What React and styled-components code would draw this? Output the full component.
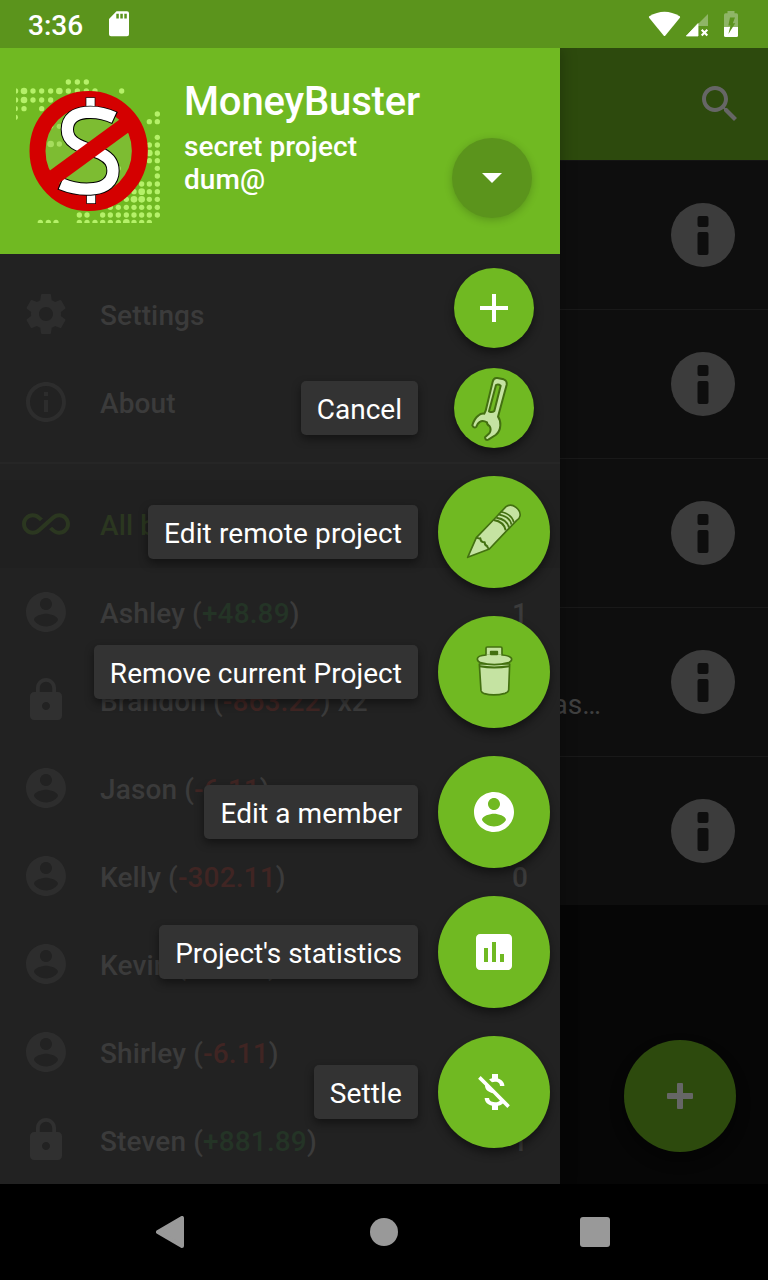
import React from "react";
import styled, { createGlobalStyle } from "styled-components";

const GlobalStyle = createGlobalStyle`
  * { box-sizing: border-box; }
  body { margin: 0; background: #000; font-family: Roboto, "Liberation Sans", sans-serif; }
  svg { display: block; flex: none; }
`;

const green = "#70b922";
const darkGreen = "#5b941c";

const Screen = styled.div`
  width: 768px;
  height: 1280px;
  display: flex;
  flex-direction: column;
  overflow: hidden;
`;

const StatusBar = styled.header`
  height: 48px;
  flex: none;
  display: flex;
  align-items: center;
  padding: 0 30px 0 28px;
  background: ${darkGreen};
  color: #fff;
`;

const Clock = styled.span`
  width: 81px;
  font-size: 28px;
  font-weight: 500;
  line-height: 32px;
  padding-top: 3px;
`;

const StatusIcons = styled.div`
  display: flex;
  margin-left: auto;
`;

const Body = styled.div`
  position: relative;
  flex: 1;
  min-height: 0;
  overflow: hidden;
`;

const BillsPage = styled.main`
  height: 100%;
  display: flex;
  flex-direction: column;
  background: #0f0f0f;
`;

const Toolbar = styled.div`
  height: 112px;
  flex: none;
  display: flex;
  align-items: center;
  justify-content: flex-end;
  padding-right: 24px;
  background: ${green};
  color: #fff;
`;

const BillRow = styled.div`
  height: 149px;
  flex: none;
  display: flex;
  align-items: center;
  padding-right: 33px;
  background: #232323;
  border-top: 1px solid ${(p) => (p.$first ? "#353535" : "#404040")};
`;

const BillTitle = styled.span`
  width: 601px;
  margin-right: 70px;
  padding-top: 46px;
  text-align: right;
  font-size: 28px;
  line-height: 32px;
  color: #a0a0a0;
`;

const AddBill = styled.button`
  position: absolute;
  right: 32px;
  bottom: 32px;
  width: 112px;
  height: 112px;
  border: 0;
  padding: 0;
  border-radius: 50%;
  display: grid;
  place-items: center;
  background: ${green};
  box-shadow: 0 8px 14px rgba(0, 0, 0, 0.4);
`;

const Scrim = styled.div`
  position: absolute;
  inset: 0;
  background: rgba(0, 0, 0, 0.6);
`;

const Drawer = styled.aside`
  position: absolute;
  inset: 0 auto 0 0;
  width: 560px;
  display: flex;
  flex-direction: column;
  background: #222;
  box-shadow: 2px 0 14px rgba(0, 0, 0, 0.25);
`;

const DrawerHeader = styled.div`
  height: 206px;
  flex: none;
  display: flex;
  align-items: flex-start;
  padding: 31px 28px 0 16px;
  background: ${green};
`;

const Account = styled.div`
  margin-left: 24px;
  color: #fff;
  font-weight: 500;
`;

const AppName = styled.div`
  font-size: 40px;
  line-height: 48px;
  letter-spacing: -0.15px;
  margin-top: -1px;
`;

const ProjectName = styled.div`
  font-size: 28px;
  line-height: 33px;
  letter-spacing: 0.07px;
  white-space: pre-line;
  margin-top: 4px;
`;

const Expand = styled.button`
  width: 80px;
  height: 80px;
  margin: 59px 0 0 auto;
  border: 0;
  padding: 0;
  border-radius: 50%;
  display: grid;
  place-items: center;
  background: ${darkGreen};
  box-shadow: 0 2px 8px rgba(0, 0, 0, 0.2);
`;

const MenuGroup = styled.nav`
  padding: ${(p) => (p.$top ? "16px 0" : "16px 0 0")};
  border-top: ${(p) => (p.$top ? "0" : "2px solid #262626")};
`;

const MenuRow = styled.div`
  height: 88px;
  display: flex;
  align-items: center;
  padding: 0 32px 0 22px;
  gap: 30px;
  background: ${(p) => (p.$active ? "#202020" : "transparent")};
  color: ${(p) => (p.$active ? "#2b3720" : p.$locked ? "#303030" : "#2d2d2d")};
`;

const MenuText = styled.span`
  font-size: 28px;
  font-weight: 500;
  line-height: 32px;
  letter-spacing: 0.13px;
  padding-top: 3px;
  white-space: nowrap;
  color: ${(p) => (p.$active ? "#2b3720" : "#3b3b3b")};
`;

const Amount = styled.span`
  color: ${(p) => (p.$positive ? "#243426" : "#402523")};
`;

const Count = styled(MenuText)`
  margin-left: auto;
`;

const SpeedDial = styled.div`
  position: absolute;
  top: 220px;
  left: 0;
  width: 550px;
  display: flex;
  flex-direction: column;
`;

const DialRow = styled.div`
  display: flex;
  align-items: center;
  justify-content: flex-end;
  gap: ${(p) => (p.$mini ? 36 : 20)}px;
  padding-right: ${(p) => (p.$mini ? 16 : 0)}px;
  margin-bottom: ${(p) => p.$after ?? 28}px;
`;

const Chip = styled.span`
  height: 54px;
  padding: 12px 16px 0;
  border-radius: 5px;
  background: #333;
  color: #fff;
  font-size: 28px;
  line-height: 33px;
  letter-spacing: ${(p) => p.$tracking ?? 0}px;
  white-space: nowrap;
  box-shadow: 0 4px 10px rgba(0, 0, 0, 0.45);
`;

const Fab = styled.button`
  width: ${(p) => (p.$mini ? 80 : 112)}px;
  height: ${(p) => (p.$mini ? 80 : 112)}px;
  border: 0;
  padding: 0;
  border-radius: 50%;
  display: grid;
  place-items: center;
  background: ${green};
  color: #fff;
  box-shadow: 0 5px 10px rgba(0, 0, 0, 0.45);
`;

const NavigationBar = styled.footer`
  height: 96px;
  flex: none;
  display: flex;
  align-items: center;
  justify-content: space-between;
  padding: 0 158px 0 156px;
  background: #000;
`;

const HomeDot = styled.span`
  width: 28px;
  height: 28px;
  border-radius: 50%;
  background: #999;
`;

const RecentSquare = styled.span`
  width: 30px;
  height: 30px;
  border-radius: 3px;
  background: #999;
`;

const paths = {
  settings:
    "M19.43 12.98c.04-.32.07-.64.07-.98s-.03-.66-.07-.98l2.11-1.65c.19-.15.24-.42.12-.64l-2-3.46c-.12-.22-.39-.3-.61-.22l-2.49 1c-.52-.4-1.08-.73-1.69-.98l-.38-2.65C14.46 2.18 14.25 2 14 2h-4c-.25 0-.46.18-.49.42l-.38 2.65c-.61.25-1.17.59-1.69.98l-2.49-1c-.23-.09-.49 0-.61.22l-2 3.46c-.13.22-.07.49.12.64l2.11 1.65c-.04.32-.07.65-.07.98s.03.66.07.98l-2.11 1.65c-.19.15-.24.42-.12.64l2 3.46c.12.22.39.3.61.22l2.49-1c.52.4 1.08.73 1.69.98l.38 2.65c.03.24.24.42.49.42h4c.25 0 .46-.18.49-.42l.38-2.65c.61-.25 1.17-.59 1.69-.98l2.49 1c.23.09.49 0 .61-.22l2-3.46c.12-.22.07-.49-.12-.64l-2.11-1.65zM12 15.5c-1.93 0-3.5-1.57-3.5-3.5s1.57-3.5 3.5-3.5 3.5 1.57 3.5 3.5-1.57 3.5-3.5 3.5z",
  info: "M11 17h2v-6h-2v6zm1-15C6.48 2 2 6.48 2 12s4.48 10 10 10 10-4.48 10-10S17.52 2 12 2zm0 18c-4.41 0-8-3.59-8-8s3.59-8 8-8 8 3.59 8 8-3.59 8-8 8zM11 9h2V7h-2v2z",
  infinity:
    "M18.6 6.62c-1.44 0-2.8.56-3.77 1.53L12 10.66 10.48 12h.01L7.8 14.39c-.64.64-1.49.99-2.4.99-1.87 0-3.39-1.51-3.39-3.38S3.53 8.62 5.4 8.62c.91 0 1.76.35 2.44 1.03l1.13 1 1.51-1.34L9.22 8.2C8.2 7.18 6.84 6.62 5.4 6.62 2.42 6.62 0 9.04 0 12s2.42 5.38 5.4 5.38c1.44 0 2.8-.56 3.77-1.53l2.83-2.5.01.01L13.52 12h-.01l2.69-2.39c.64-.64 1.49-.99 2.4-.99 1.87 0 3.39 1.51 3.39 3.38s-1.52 3.38-3.39 3.38c-.9 0-1.76-.35-2.44-1.03l-1.14-1.01-1.51 1.34 1.27 1.12c1.02 1.01 2.37 1.57 3.82 1.57 2.98 0 5.4-2.41 5.4-5.38s-2.42-5.37-5.4-5.37z",
  person:
    "M12 2C6.48 2 2 6.48 2 12s4.48 10 10 10 10-4.48 10-10S17.52 2 12 2zm0 3c1.66 0 3 1.34 3 3s-1.34 3-3 3-3-1.34-3-3 1.34-3 3-3zm0 14.2c-2.5 0-4.71-1.28-6-3.22.03-1.99 4-3.08 6-3.08 1.99 0 5.97 1.09 6 3.08-1.29 1.94-3.5 3.22-6 3.22z",
  lock: "M18 8h-1V6c0-2.76-2.24-5-5-5S7 3.24 7 6v2H6c-1.1 0-2 .9-2 2v10c0 1.1.9 2 2 2h12c1.1 0 2-.9 2-2V10c0-1.1-.9-2-2-2zm-6 9c-1.1 0-2-.9-2-2s.9-2 2-2 2 .9 2 2-.9 2-2 2zm3.1-9H8.9V6c0-1.71 1.39-3.1 3.1-3.1 1.71 0 3.1 1.39 3.1 3.1v2z",
  search:
    "M15.5 14h-.79l-.28-.27C15.41 12.59 16 11.11 16 9.5 16 5.91 13.09 3 9.5 3S3 5.91 3 9.5 5.91 16 9.5 16c1.61 0 3.09-.59 4.23-1.57l.27.28v.79l5 4.99L20.49 19l-4.99-5zm-6 0C7.01 14 5 11.99 5 9.5S7.01 5 9.5 5 14 7.01 14 9.5 11.99 14 9.5 14z",
  add: "M19 13h-6v6h-2v-6H5v-2h6V5h2v6h6v2z",
  chart:
    "M19 3H5c-1.1 0-2 .9-2 2v14c0 1.1.9 2 2 2h14c1.1 0 2-.9 2-2V5c0-1.1-.9-2-2-2zM9 17H7v-7h2v7zm4 0h-2V7h2v10zm4 0h-2v-4h2v4z",
  moneyOff:
    "M12.5 6.9c1.78 0 2.44.85 2.5 2.1h2.21c-.07-1.72-1.12-3.3-3.21-3.81V3h-3v2.16c-.53.12-1.03.3-1.48.54l1.47 1.47c.41-.17.91-.27 1.51-.27zM5.33 4.06L4.06 5.33 7.5 8.77c0 2.08 1.56 3.21 3.91 3.91l3.51 3.51c-.34.48-1.05.91-2.42.91-2.06 0-2.87-.92-2.98-2.1h-2.2c.12 2.19 1.76 3.42 3.68 3.83V21h3v-2.15c.96-.18 1.82-.55 2.45-1.12l2.22 2.22 1.27-1.27L5.33 4.06z",
};

const Icon = ({ name }) => (
  <svg width="48" height="48" viewBox="0 0 24 24" fill="currentColor">
    <path d={paths[name]} />
  </svg>
);

const SdCard = () => (
  <svg width="20" height="26" viewBox="0 0 20 26">
    <path d="M7.5.3H18A2 2 0 0 1 20 2.3V23.2A2 2 0 0 1 18 25.2H2A2 2 0 0 1 0 23.2V8Z" fill="#fff" />
    <path d="M7.3 2.8H9.8V7.5H7.3ZM11.3 2.8H13.8V7.5H11.3ZM15.3 2.8H17.8V7.5H15.3Z" fill={darkGreen} />
  </svg>
);

const SignalIcons = () => (
  <svg width="90" height="26" viewBox="0 0 90 26">
    <path d="M1.3 5.3Q16.5-4 31.7 5.3Q32.5 6 31.7 7L17.4 24.5Q16.5 25.5 15.6 24.5L1.3 7Q.5 6 1.3 5.3Z" fill="#fff" />
    <path d="M60 3V15H50V13Z" fill="#8fb567" />
    <path d="M38.3 25L50 12.6V25Z" fill="#fff" stroke="#fff" strokeWidth=".8" strokeLinejoin="round" />
    <path d="M53.7 18.8L59.3 24.6M59.3 18.8L53.7 24.6" stroke="#fff" strokeWidth="2.1" />
    <path d="M79.5 0H86.5V2.3H88.5Q90 2.3 90 4V16H76V4Q76 2.3 77.5 2.3H79.5Z" fill="#8fb567" />
    <path d="M76 16H90V24.5Q90 26 88.5 26H77.5Q76 26 76 24.5Z" fill="#fff" />
    <path d="M82 6.5H87L84.8 12.2H87.2L80.4 23L82.5 14.5H80.4Z" fill={darkGreen} />
  </svg>
);

// Each entry: row y followed by the dot centres on that row.
const dots = [
  [246, 205, 232, 259],
  [273, 47, 72, 99, 125, 152, 178, 205, 232, 259, 285, 365],
  [300, 47, 72, 99, 125, 152],
  [326, 46, 72, 125],
  [352, 46],
  [379, 152, 178],
  [432, 152, 178],
  [342, 472],
  [365, 448, 472],
  [412, 472],
  [435, 448, 472],
  [459, 448, 472],
  [482, 448, 472],
  [505, 355, 472],
  [528, 472],
  [552, 425, 448, 472],
  [575, 402, 425, 448, 472],
  [598, 379, 402, 425, 448, 472],
  [622, 331, 355, 379, 402, 425, 448, 472],
  [645, 238, 261, 308, 331, 355, 379, 402, 425, 448, 472],
  [667, 121, 145, 168, 238, 261, 285, 308, 331, 355, 379, 402, 425, 448],
];
const bigDots = ["273-72", "300-72", "273-178", "598-425", "598-402", "575-425", "432-152", "459-448", "667-379"];

const Logo = () => (
  <svg width="144" height="144" viewBox="48 237 432 432">
    <g fill="#b5f169">
      {dots.flatMap(([y, ...xs]) =>
        xs.map((x) => <circle key={`${y}-${x}`} cx={x} cy={y} r={bigDots.includes(`${y}-${x}`) ? 10 : 8} />)
      )}
    </g>
    <ellipse cx="266" cy="453" rx="153.500" ry="156" fill="#90c04a" fillOpacity=".4" stroke="#d40000" strokeWidth="48" />
    <g fill="#fff" stroke="#000" strokeWidth="2">
      <rect x="258" y="293" width="27" height="34" />
      <rect x="260" y="577" width="27" height="34" />
    </g>
    <g fill="none">
      <path d="M345 354C300 333 203 320 202 388C201 440 270 445 305 462C330 475 339 490 339 512C339 580 240 575 180 550" stroke="#000" strokeWidth="40" />
      <path d="M342 352.500C300 333 203 320 202 388C201 440 270 445 305 462C330 475 339 490 339 512C339 580 240 575 183 551.500" stroke="#fff" strokeWidth="34" />
      <path d="M142 546L390 365" stroke="#d40000" strokeWidth="47" />
    </g>
  </svg>
);

const InfoDisc = () => (
  <svg width="64" height="64" viewBox="0 0 64 64">
    <circle cx="32" cy="32" r="32" fill="#969696" />
    <rect x="26.500" y="13" width="11" height="11" rx="2" fill="#232323" />
    <rect x="26.500" y="29" width="11" height="23" rx="2" fill="#232323" />
  </svg>
);

const Wrench = () => (
  <svg width="80" height="80" viewBox="162 336 240 240" strokeLinejoin="round" strokeWidth="6" stroke="#437011">
    <path
      d="M278 377Q281 364 292 366L311 370Q322 374 320 386L294 482Q302 493 301 508Q300 527 287 537L265 551Q256 554 255 544L268 532Q275 521 269 511Q260 504 261 499Q248 491 239 498Q233 501 229 512Q222 518 217 508Q223 488 235 479Q243 471 253 473L257 464Z"
      fill="#c5e3a2"
    />
    <path d="M288 387Q295 383 302 389L283 465Q276 471 267 466Z" fill={green} />
  </svg>
);

const Pencil = () => (
  <svg width="112" height="112" viewBox="444 48 336 336" fill="#c5e3a2" stroke="#437011" strokeWidth="5" strokeLinejoin="round">
    <path d="M533 292L559 233L613 177L648 140Q662 130 678 142Q693 154 690 168Q689 175 680 181L598 267Z" />
    <path d="M559 233Q566 236 571 235Q572 247 584 247Q584 257 592 259Q591 263 598 267M611 180Q642 185 647 211M619 173Q652 178 657 203" fill="none" strokeWidth="6" />
    <path d="M625 163Q661 170 664 194M632 155Q667 163 671 187" fill="none" strokeWidth="5" />
  </svg>
);

const Bin = () => (
  <svg width="112" height="112" viewBox="444 468 336 336" fill="#c5e3a2" stroke="#437011" strokeWidth="5" strokeLinejoin="round">
    <path d="M568 612L573 692Q574 698 583 701Q612 709 645 700Q655 697 656 690L659 612Z" />
    <path d="M569 619Q612 626 658 619" fill="none" strokeWidth="6" />
    <path d="M588 590V565Q588 561 592 561H632Q636 561 636 565V590Z" />
    <path d="M562 597Q562 587 588 585H637Q665 588 665 598Q665 604 656 608Q612 620 571 608Q562 604 562 597Z" />
    <path d="M590 583H634V589H590Z" stroke="none" />
    <path d="M602 575H622V583H602Z" fill="#437011" />
  </svg>
);

const members = [
  { name: "Ashley", amount: "+48.89", count: "1" },
  { name: "Brandon", amount: "-863.22", suffix: " x2", locked: true },
  { name: "Jason", amount: "-6.11" },
  { name: "Kelly", amount: "-302.11", count: "0" },
  { name: "Kevin", amount: "-36.11" },
  { name: "Shirley", amount: "-6.11" },
  { name: "Steven", amount: "+881.89", count: "1", locked: true },
];

const actions = [
  { label: "Edit remote project", icon: <Pencil />, tracking: 0.09 },
  { label: "Remove current Project", icon: <Bin />, tracking: 0.05 },
  { label: "Edit a member", icon: <Icon name="person" />, tracking: 0.08 },
  { label: "Project's statistics", icon: <Icon name="chart" />, tracking: -0.05 },
  { label: "Settle", icon: <Icon name="moneyOff" />, tracking: 0.12 },
];

const bills = ["", "", "", "as…", ""];

export default function App() {
  return (
    <Screen>
      <GlobalStyle />
      <StatusBar>
        <Clock>3:36</Clock>
        <SdCard />
        <StatusIcons>
          <SignalIcons />
        </StatusIcons>
      </StatusBar>
      <Body>
        <BillsPage>
          <Toolbar>
            <Icon name="search" />
          </Toolbar>
          {bills.map((title, i) => (
            <BillRow key={i} $first={i === 0}>
              <BillTitle>{title}</BillTitle>
              <InfoDisc />
            </BillRow>
          ))}
        </BillsPage>
        <AddBill>
          <svg width="26" height="26" viewBox="0 0 26 26">
            <path d="M10 1Q10 0 11 0H15Q16 0 16 1V10H25Q26 10 26 11V15Q26 16 25 16H16V25Q16 26 15 26H11Q10 26 10 25V16H1Q0 16 0 15V11Q0 10 1 10H10Z" fill="#fff" />
          </svg>
        </AddBill>
        <Scrim />
        <Drawer>
          <DrawerHeader>
            <Logo />
            <Account>
              <AppName>MoneyBuster</AppName>
              <ProjectName>{"secret project\ndum@"}</ProjectName>
            </Account>
            <Expand>
              <svg width="20" height="10" viewBox="0 0 20 10">
                <path d="M0 0H20L10 10Z" fill="#fff" />
              </svg>
            </Expand>
          </DrawerHeader>
          <MenuGroup $top>
            <MenuRow>
              <Icon name="settings" />
              <MenuText>Settings</MenuText>
            </MenuRow>
            <MenuRow>
              <Icon name="info" />
              <MenuText>About</MenuText>
            </MenuRow>
          </MenuGroup>
          <MenuGroup>
            <MenuRow $active>
              <Icon name="infinity" />
              <MenuText $active>All bills</MenuText>
            </MenuRow>
            {members.map((m) => (
              <MenuRow key={m.name} $locked={m.locked}>
                <Icon name={m.locked ? "lock" : "person"} />
                <MenuText>
                  {m.name} (<Amount $positive={m.amount[0] === "+"}>{m.amount}</Amount>){m.suffix}
                </MenuText>
                {m.count && <Count>{m.count}</Count>}
              </MenuRow>
            ))}
          </MenuGroup>
        </Drawer>
        <SpeedDial>
          <DialRow $mini $after={20}>
            <Fab $mini>
              <Icon name="add" />
            </Fab>
          </DialRow>
          <DialRow $mini>
            <Chip>Cancel</Chip>
            <Fab $mini>
              <Wrench />
            </Fab>
          </DialRow>
          {actions.map((a) => (
            <DialRow key={a.label}>
              <Chip $tracking={a.tracking}>{a.label}</Chip>
              <Fab>{a.icon}</Fab>
            </DialRow>
          ))}
        </SpeedDial>
      </Body>
      <NavigationBar>
        <svg width="32" height="32" viewBox="0 0 32 32">
          <path d="M2 16L26 2V30Z" fill="#999" stroke="#999" strokeWidth="4" strokeLinejoin="round" />
        </svg>
        <HomeDot />
        <RecentSquare />
      </NavigationBar>
    </Screen>
  );
}
